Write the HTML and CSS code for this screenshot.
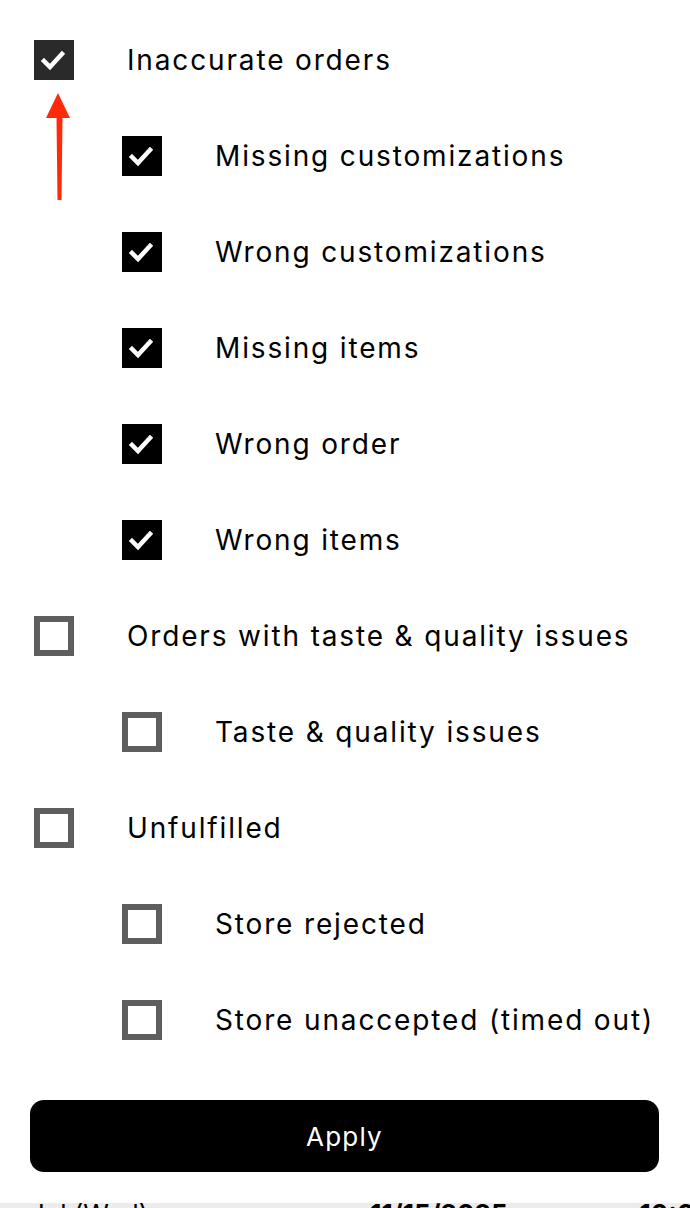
FILE: index.html
```html
<!DOCTYPE html>
<html>
<head>
<meta charset="utf-8">
<link rel="stylesheet" href="styles.css">
</head>
<body>
<div class="sheet">
  <ul class="list">
    <li class="row">
      <span class="box checked dim"><svg viewBox="0 0 40 40"><polyline points="10,21 16,27 28,14"/></svg></span>
      <span class="label">Inaccurate orders</span>
      <svg class="arrow" viewBox="0 0 30 110"><polygon points="14,0 26,25 18.5,25 17.5,107 13.5,107 12.5,25 2,25" /></svg>
    </li>
    <li class="row sub">
      <span class="box checked"><svg viewBox="0 0 40 40"><polyline points="10,21 16,27 28,14"/></svg></span>
      <span class="label">Missing customizations</span>
    </li>
    <li class="row sub">
      <span class="box checked"><svg viewBox="0 0 40 40"><polyline points="10,21 16,27 28,14"/></svg></span>
      <span class="label">Wrong customizations</span>
    </li>
    <li class="row sub">
      <span class="box checked"><svg viewBox="0 0 40 40"><polyline points="10,21 16,27 28,14"/></svg></span>
      <span class="label">Missing items</span>
    </li>
    <li class="row sub">
      <span class="box checked"><svg viewBox="0 0 40 40"><polyline points="10,21 16,27 28,14"/></svg></span>
      <span class="label">Wrong order</span>
    </li>
    <li class="row sub">
      <span class="box checked"><svg viewBox="0 0 40 40"><polyline points="10,21 16,27 28,14"/></svg></span>
      <span class="label">Wrong items</span>
    </li>
    <li class="row">
      <span class="box"></span>
      <span class="label">Orders with taste &amp; quality issues</span>
    </li>
    <li class="row sub">
      <span class="box"></span>
      <span class="label">Taste &amp; quality issues</span>
    </li>
    <li class="row">
      <span class="box"></span>
      <span class="label">Unfulfilled</span>
    </li>
    <li class="row sub">
      <span class="box"></span>
      <span class="label">Store rejected</span>
    </li>
    <li class="row sub">
      <span class="box"></span>
      <span class="label">Store unaccepted (timed out)</span>
    </li>
  </ul>
  <div class="actions">
    <button class="apply">Apply</button>
  </div>
</div>
<div class="peek">
  <span class="p1">Jul (Wed)</span>
  <span class="p2">11/15/2025</span>
  <span class="p3">10:00</span>
</div>
</body>
</html>
```
FILE: styles.css
```css
html, body {
  margin: 0;
  padding: 0;
  background: #fff;
}
body {
  width: 690px;
  height: 1208px;
  overflow: hidden;
  font-family: Inter, "Noto Sans", sans-serif;
  color: #000;
}
.sheet {
  height: 1203px;
}
.list {
  list-style: none;
  margin: 0;
  padding: 12px 0 0 34px;
}
.row {
  position: relative;
  height: 96px;
  display: flex;
  align-items: center;
  gap: 53px;
}
.row.sub {
  padding-left: 88px;
}
.box {
  width: 40px;
  height: 40px;
  box-sizing: border-box;
  border: 6px solid #5e5e5e;
  background: #fff;
  flex: none;
  display: flex;
}
.box.checked {
  border: none;
  background: #000;
}
.box.checked.dim {
  background: #2a2a2a;
}
.box svg {
  width: 40px;
  height: 40px;
}
.box polyline {
  fill: none;
  stroke: #fff;
  stroke-width: 4.5;
  stroke-linecap: square;
  stroke-linejoin: miter;
}
.label {
  font-size: 28px;
  line-height: 34px;
  letter-spacing: 1.85px;
  white-space: nowrap;
}
.arrow {
  position: absolute;
  left: 10px;
  top: 81px;
  width: 30px;
  height: 110px;
}
.arrow polygon {
  fill: #ff2a0a;
}
.actions {
  padding: 32px 31px 0 30px;
}
.apply {
  display: block;
  width: 100%;
  height: 72px;
  border: none;
  border-radius: 14px;
  background: #000;
  color: #fff;
  font-family: Inter, "Noto Sans", sans-serif;
  font-size: 26px;
  letter-spacing: 1.2px;
}
.peek {
  height: 5px;
  background: #ececec;
  overflow: hidden;
  font-family: Inter, sans-serif;
  font-size: 26px;
  font-weight: 700;
  line-height: 26px;
  color: #000;
  display: flex;
}
.peek span {
  position: relative;
  top: -2px;
  white-space: nowrap;
}
.p1 { margin-left: 30px; font-weight: 400; }
.p2 { margin-left: 222px; }
.p3 { margin-left: 132px; }
```
